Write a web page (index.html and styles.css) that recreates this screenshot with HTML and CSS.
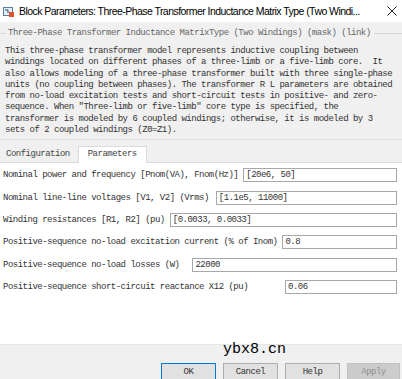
FILE: index.html
```html
<!DOCTYPE html>
<html lang="en">

<head>
    <meta charset="UTF-8">
    <meta name="viewport" content="width=device-width, initial-scale=1.0">
    <title>Block Parameters</title>
    <link rel="stylesheet" href="styles.css">
</head>

<body>
    <div class="dialog">
        <div class="titlebar">
            <svg class="app-icon" width="11" height="10" viewBox="0 0 11 10">
                <rect x="0.5" y="0.5" width="9" height="8" fill="#e4eef8" stroke="#5f7f9f"/>
                <path d="M2 3 L5 3 L5 6" fill="none" stroke="#2d4f73" stroke-width="1"/>
                <rect x="6" y="5" width="5" height="5" fill="#e0542e"/>
            </svg>
            <span class="title">Block Parameters: Three-Phase Transformer Inductance Matrix Type (Two Windi...</span>
            <svg class="close" width="10" height="10" viewBox="0 0 10 10">
                <path d="M0.5 0.5 L9.5 9.5 M9.5 0.5 L0.5 9.5" stroke="#222" stroke-width="1"/>
            </svg>
        </div>

        <div class="body">
            <div class="group">
                <div class="group-head">
                    <span class="rule rule-left"></span>
                    <span class="group-title">Three-Phase Transformer Inductance MatrixType (Two Windings) (mask) (link)</span>
                    <span class="rule"></span>
                </div>
                <p class="desc">This three-phase transformer model represents inductive coupling between<br>windings located on different phases of a three-limb or a five-limb core.  It<br>also allows modeling of a three-phase transformer built with three single-phase<br>units (no coupling between phases). The transformer R L parameters are obtained<br>from no-load excitation tests and short-circuit tests in positive- and zero-<br>sequence. When "Three-limb or five-limb" core type is specified, the<br>transformer is modeled by 6 coupled windings; otherwise, it is modeled by 3<br>sets of 2 coupled windings (Z0=Z1).</p>
            </div>

            <div class="tabs">
                <span class="tab">Configuration</span>
                <span class="tab active">Parameters</span>
            </div>
        </div>

        <div class="panel">
            <div class="row">
                <label>Nominal power and frequency [Pnom(VA), Fnom(Hz)]</label>
                <input type="text" value="[20e6, 50]">
            </div>
            <div class="row">
                <label>Nominal line-line voltages [V1, V2] (Vrms)</label>
                <input type="text" value="[1.1e5, 11000]" class="gap-wide">
            </div>
            <div class="row">
                <label>Winding resistances [R1, R2] (pu)</label>
                <input type="text" value="[0.0033, 0.0033]">
            </div>
            <div class="row">
                <label>Positive-sequence no-load excitation current (% of Inom)</label>
                <input type="text" value="0.8">
            </div>
            <div class="row">
                <label>Positive-sequence no-load losses (W)</label>
                <input type="text" value="22000" class="gap-losses">
            </div>
            <div class="row">
                <label>Positive-sequence short-circuit reactance X12 (pu)</label>
                <input type="text" value="0.06" class="gap-x12">
            </div>
        </div>

        <div class="footer">
            <button class="btn default">OK</button>
            <button class="btn">Cancel</button>
            <button class="btn">Help</button>
            <button class="btn disabled">Apply</button>
        </div>

        <div class="watermark">ybx8.cn</div>
    </div>
</body>

</html>
```

FILE: styles.css
```css
body {
    margin: 0;
    padding: 0;
    overflow: hidden;
    background-color: #f0f0f0;
}

.dialog {
    position: relative;
    width: 402px;
    height: 379px;
    overflow: hidden;
    font-family: "Liberation Mono", "Noto Sans CJK SC", monospace;
    font-size: 9px;
    letter-spacing: -0.5px;
    color: #333;
}

/* title bar */
.titlebar {
    height: 22px;
    background-color: #fff;
    display: flex;
    align-items: center;
    padding: 0 4px 0 3px;
}

.app-icon {
    flex: none;
    margin-right: 5px;
    margin-top: 2px;
}

.title {
    flex: 1;
    font-family: "Liberation Sans", Arial, sans-serif;
    font-size: 10.5px;
    letter-spacing: -0.55px;
    color: #000;
    white-space: nowrap;
    overflow: hidden;
}

.close {
    flex: none;
    margin-left: 6px;
    margin-right: 1px;
}

/* gray area with description */
.body {
    background-color: #f0f0f0;
}

.group {
    border-bottom: 1px solid #e2e2e2;
    padding-top: 5px;
    height: 112px;
}

.group-head {
    display: flex;
    align-items: center;
    height: 12px;
}

.rule {
    flex: 1;
    height: 1px;
    background-color: #d5d5d5;
}

.rule-left {
    flex: none;
    width: 6px;
}

.group-title {
    color: #666;
    padding: 0 3px 0 2px;
    white-space: nowrap;
}

.desc {
    margin: 7px 0 0 5px;
    line-height: 11.3px;
    white-space: pre;
}

/* tabs */
.tabs {
    height: 22px;
    display: flex;
    align-items: flex-end;
    border-bottom: 1px solid #dadada;
    padding-left: 1px;
}

.tab {
    height: 15px;
    line-height: 15px;
    padding: 0 8px 0 5px;
    color: #444;
}

.tab.active {
    background-color: #fff;
    border: 1px solid #dadada;
    border-bottom: none;
    height: 16px;
    margin-bottom: -1px;
    padding: 0 9px 0 9px;
}

/* parameter panel */
.panel {
    background-color: #fff;
    height: 180px;
    padding-top: 1px;
}

.row {
    display: flex;
    align-items: center;
    height: 22.4px;
    padding: 0 5px 0 3px;
}

.row label {
    white-space: nowrap;
    color: #333;
}

.row input {
    flex: 1;
    min-width: 0;
    height: 12px;
    margin-left: 5px;
    padding: 0 2px;
    border: 1px solid #a8a8a8;
    font-family: "Liberation Mono", "Noto Sans CJK SC", monospace;
    font-size: 9px;
    letter-spacing: -0.5px;
    color: #333;
    background-color: #fff;
    outline: none;
}

.row input.gap-wide {
    margin-left: 7px;
}

.row input.gap-losses {
    margin-left: 13px;
}

.row input.gap-x12 {
    margin-left: 37px;
}

/* buttons */
.footer {
    height: 40px;
    border-top: 1px solid #e6e6e6;
    background-color: #f0f0f0;
    display: flex;
    justify-content: flex-end;
    align-items: flex-start;
    gap: 7px;
    padding: 18px 2px 0 0;
}

.btn {
    width: 55px;
    height: 21px;
    background-color: #e1e1e1;
    border: 1px solid #adadad;
    font-family: "Liberation Mono", "Noto Sans CJK SC", monospace;
    font-size: 9px;
    letter-spacing: -0.5px;
    color: #333;
    padding: 0;
    padding-bottom: 4px;
}

.btn.default {
    border-color: #0078d7;
}

.btn.disabled {
    background-color: #cccccc;
    border-color: #bfbfbf;
    color: #8f8f8f;
    width: 53px;
}

.watermark {
    position: absolute;
    left: 223px;
    top: 341px;
    font-family: "Liberation Mono", monospace;
    font-size: 15px;
    letter-spacing: 0;
    color: #000;
}
```
